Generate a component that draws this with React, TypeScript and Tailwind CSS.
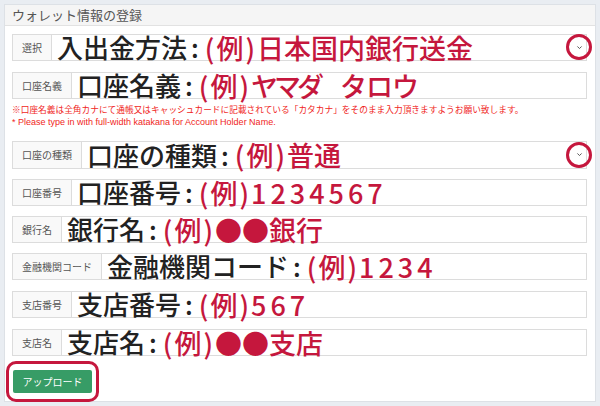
import React from 'react';

const jp = { fontFamily: '"Noto Sans CJK JP", "Noto Sans", sans-serif' };

const Paren: React.FC<{ children: React.ReactNode }> = ({ children }) => (
    <span className="px-[2px]">{children}</span>
);

const Num: React.FC<{ children: React.ReactNode }> = ({ children }) => (
    <span className="tracking-[4px]">{children}</span>
);

interface FieldRowProps {
    label: string;
    title: string;
    example: React.ReactNode;
    select?: boolean;
    className?: string;
}

const FieldRow: React.FC<FieldRowProps> = ({ label, title, example, select, className }) => {
    return (
        <div className={`flex h-[27px] border border-[#dcdcdc] bg-white ${className ?? ''}`}>
            <div className="flex items-center px-[9px] border-r border-[#dcdcdc] bg-[#f9f9f9] text-[10px] text-[#555] whitespace-nowrap">
                {label}
            </div>
            <div className="flex flex-1 items-center pl-[5px] leading-none font-medium whitespace-nowrap">
                <span className="text-[26px] text-[#222]">{title}</span>
                <span className="mx-[4px] text-[26px] text-[#222]">:</span>
                <span className="text-[27px] text-[#c5173d]">
                    <Paren>(</Paren>例<Paren>)</Paren>
                    {example}
                </span>
                {select && (
                    <span className="relative ml-auto mr-[2px] flex h-[10px] w-[10px] items-center justify-center">
                        <svg viewBox="0 0 10 10" className="h-[7px] w-[7px]">
                            <path d="M2 3.5 L5 6.5 L8 3.5" fill="none" stroke="#555" strokeWidth="1.4" />
                        </svg>
                        <span className="absolute left-1/2 top-1/2 h-[26px] w-[26px] -translate-x-1/2 -translate-y-1/2 rounded-full border-[3px] border-[#c5173d]" />
                    </span>
                )}
            </div>
        </div>
    );
};

const App: React.FC = () => {
    return (
        <div className="w-[600px] h-[406px] bg-[#e9edf2] p-[4px]" style={jp}>
            <div className="flex h-full flex-col border border-[#dde1e6] bg-white">
                <div className="flex h-[28px] items-center border-b border-[#e2e2e2] bg-[#f5f5f5] px-[7px] text-[13px] text-[#555]">
                    ウォレット情報の登録
                </div>
                <div className="flex flex-col pl-[7px] pr-[8px] pt-[8px]">
                    <FieldRow label="選択" title="入出金方法" example="日本国内銀行送金" select />
                    <FieldRow
                        className="mt-[11px] h-[26px]"
                        label="口座名義"
                        title="口座名義"
                        example={
                            <>
                                <span className="tracking-[-4px]">ヤマダ</span>
                                <span className="inline-block w-[20px]" />
                                <span className="tracking-[-1px]">タロウ</span>
                            </>
                        }
                    />
                    <div className="mt-[4px] text-[#f01e23] leading-[13px]">
                        <p className="text-[8.7px] whitespace-nowrap">
                            ※口座名義は全角カナにて通帳又はキャッシュカードに記載されている「カタカナ」をそのまま入力頂きますようお願い致します。
                        </p>
                        <p className="text-[9px]" style={{ fontFamily: '"Liberation Sans", Arial, sans-serif' }}>
                            * Please type in with full-width katakana for Account Holder Name.
                        </p>
                    </div>
                    <FieldRow className="mt-[12px] h-[28px]" label="口座の種類" title="口座の種類" example="普通" select />
                    <FieldRow className="mt-[10px] h-[26px]" label="口座番号" title="口座番号" example={<Num>1234567</Num>} />
                    <FieldRow className="mt-[10px]" label="銀行名" title="銀行名" example="●●銀行" />
                    <FieldRow className="mt-[10px] h-[26px]" label="金融機関コード" title="金融機関コード" example={<Num>1234</Num>} />
                    <FieldRow className="mt-[11px] h-[26px]" label="支店番号" title="支店番号" example={<Num>567</Num>} />
                    <FieldRow className="mt-[11px] h-[25px]" label="支店名" title="支店名" example="●●支店" />
                    <div className="mt-[5px] -ml-[6px] self-start rounded-[10px] border-[3px] border-[#c5173d] px-[4px] py-[6px]">
                        <button className="block h-[23px] w-[79px] rounded-[2px] bg-[#379c66] text-[10px] text-white">
                            アップロード
                        </button>
                    </div>
                </div>
            </div>
        </div>
    );
};

export default App;
